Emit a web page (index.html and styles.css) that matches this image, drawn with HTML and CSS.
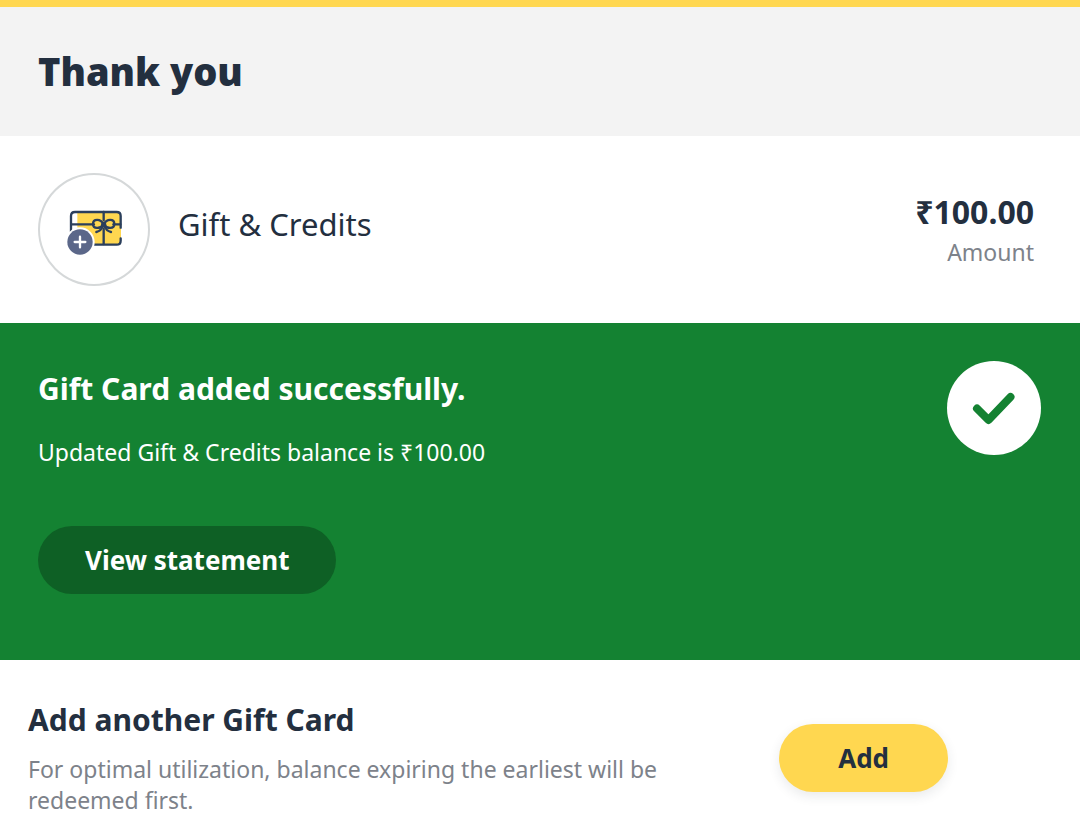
FILE: index.html
```html
<!DOCTYPE html>
<html lang="en">
<head>
  <meta charset="UTF-8">
  <meta name="viewport" content="width=device-width, initial-scale=1">
  <title>Thank you</title>
  <link rel="stylesheet" href="styles.css">
</head>
<body>
  <header class="page-header">
    <h1>Thank you</h1>
  </header>

  <main>
    <!-- Payment method and amount -->
    <section class="summary">
      <div class="method-icon">
        <svg viewBox="0 0 336 336" aria-hidden="true">
          <path d="M118 116H238Q249 116 249 127V204Q249 214 238 214H118Z" fill="#ffd750"/>
          <g fill="none" stroke="#2b3f5c" stroke-width="7" stroke-linecap="round" stroke-linejoin="round">
            <path d="M99 178V129Q99 117 111 117H236Q248 117 248 129V164"/>
            <path d="M248 196V203Q248 215 236 215H155"/>
            <path d="M102 154H168M226 154H247M197 117V142M197 168V213"/>
            <path d="M196 154C188 136 165 137 165 153C165 168 187 169 196 154"/>
            <path d="M198 154C206 136 229 137 229 153C229 168 207 169 198 154"/>
            <path d="M196 156Q190 174 175 177M198 156Q204 174 219 177"/>
          </g>
          <circle cx="197" cy="155" r="8" fill="#2b3f5c"/>
          <circle cx="126" cy="207" r="44" fill="#fff"/>
          <circle cx="126" cy="207" r="38" fill="#5b6789"/>
          <path d="M110 207H142M126 191V223" stroke="#fff" stroke-width="7" stroke-linecap="round"/>
        </svg>
      </div>
      <h2 class="method-name">Gift &amp; Credits</h2>
      <div class="amount">
        <strong>₹100.00</strong>
        <span>Amount</span>
      </div>
    </section>

    <!-- Status of the gift card -->
    <section class="status">
      <div class="status-text">
        <h2>Gift Card added successfully.</h2>
        <p>Updated Gift &amp; Credits balance is ₹100.00</p>
        <button type="button" class="btn btn-statement">View statement</button>
      </div>
      <svg class="status-check" viewBox="0 0 94 94" aria-hidden="true">
        <circle cx="47" cy="47" r="47" fill="#fff"/>
        <path d="M30 47.500L41.500 59L63.500 36" fill="none" stroke="#148232" stroke-width="8" stroke-linecap="round" stroke-linejoin="round"/>
      </svg>
    </section>

    <!-- Add another card -->
    <section class="another">
      <div class="another-text">
        <h2>Add another Gift Card</h2>
        <p>For optimal utilization, balance expiring the earliest will be redeemed first.</p>
      </div>
      <div class="another-action">
        <button type="button" class="btn btn-add">Add</button>
      </div>
    </section>
  </main>
</body>
</html>
```
FILE: styles.css
```css
* {
  box-sizing: border-box;
}
body {
  margin: 0;
  background: #fff;
  color: #232f3f;
  font-family: "Noto Sans", sans-serif;
}
h1, h2, p {
  margin: 0;
}
.page-header {
  border-top: 7px solid #ffd750;
  background: #f3f3f3;
  padding: 36px 38px 37px;
}
h1 {
  font-size: 38px;
  font-weight: 900;
  line-height: 56px;
}
.summary {
  display: flex;
  align-items: center;
  padding: 37px 46px 37px 38px;
}
.method-icon {
  width: 112px;
  height: 113px;
  border: 2px solid #d5d8d9;
  border-radius: 50%;
}
.method-icon svg {
  display: block;
  width: 112px;
  margin: -2px;
}
.method-name {
  flex: 1;
  padding: 0 0 12px 28px;
  font-size: 31px;
  font-weight: 400;
  line-height: 40px;
}
.amount {
  display: flex;
  flex-direction: column;
  padding-top: 4px;
  text-align: right;
}
.amount strong {
  font-size: 32px;
  line-height: 40px;
}
.amount span {
  color: #7d828a;
  font-size: 23px;
  line-height: 40px;
}
.status {
  display: flex;
  justify-content: space-between;
  background: #148232;
  color: #fff;
  padding: 38px 39px 66px 38px;
}
.status h2 {
  margin-top: 8px;
  font-size: 30px;
  line-height: 40px;
}
.status p {
  margin: 28px 0 58px;
  font-size: 23px;
  line-height: 31px;
}
.status-check {
  width: 94px;
  height: 94px;
}
.btn {
  height: 68px;
  border: none;
  border-radius: 34px;
  font-family: inherit;
  font-size: 26px;
  font-weight: 700;
  line-height: 40px;
  cursor: pointer;
}
.btn-statement {
  padding: 0 47px;
  background: #0e6025;
  color: #fff;
}
.another {
  display: flex;
  padding: 40px 28px 22px;
}
.another-text {
  flex: 1;
}
.another h2 {
  font-size: 30px;
  line-height: 40px;
}
.another p {
  max-width: 660px;
  margin-top: 14px;
  color: #7d828a;
  font-size: 23px;
  line-height: 31px;
}
.another-action {
  padding: 24px 104px 0 0;
}
.btn-add {
  padding: 0 59px;
  background: #ffd750;
  color: #232f3f;
  box-shadow: 0 4px 12px rgba(35, 47, 63, 0.1);
}
```
